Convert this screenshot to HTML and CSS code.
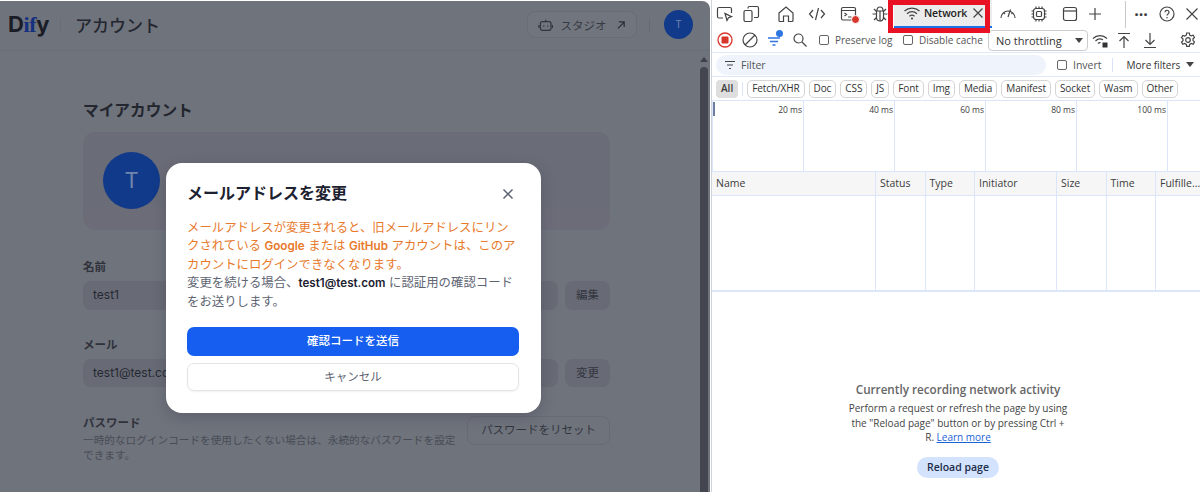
FILE: index.html
```html
<!DOCTYPE html>
<html lang="ja">
 <head>
  <meta charset="utf-8">
  <title>Dify account</title>
  <link rel="stylesheet" href="styles.css">
 </head>
 <body>

  <div id="app">
    <div id="top-bar">
      <div class="logo">D<span class="logo-blue">if</span>y</div>
      <div class="top-sep"></div>
      <div class="page-name">アカウント</div>
      <div class="top-right">
        <div class="studio-btn">
          <svg width="16" height="16" viewBox="0 0 16 16" fill="none" stroke="#33363f" stroke-width="1.3"><rect x="2.5" y="4.5" width="11" height="9" rx="2"/><path d="M8 4.5V2.500M1 8v3M15 8v3"/><circle cx="6" cy="9" r=".8" fill="#33363f" stroke="none"/><circle cx="10" cy="9" r=".8" fill="#33363f" stroke="none"/></svg>
          <span>スタジオ</span>
          <svg width="10" height="10" viewBox="0 0 10 10" fill="none" stroke="#2b2e36" stroke-width="1.3"><path d="M2 8.500L8.500 2M3 1.700h5.500v5.500"/></svg>
        </div>
        <div class="top-sep2"></div>
        <div class="avatar-small">T</div>
      </div>
    </div>

    <div id="account">
      <h1>マイアカウント</h1>
      <div class="profile-card"><div class="avatar">T</div></div>

      <div class="label name-label">名前</div>
      <div class="field-row">
        <div class="fake-input">test1</div>
        <div class="fake-btn">編集</div>
      </div>

      <div class="label mail-label">メール</div>
      <div class="field-row">
        <div class="fake-input">test1@test.com</div>
        <div class="fake-btn">変更</div>
      </div>

      <div class="password-row">
        <div class="password-text">
          <div class="label">パスワード</div>
          <p>一時的なログインコードを使用したくない場合は、永続的なパスワードを設定<br>できます。</p>
        </div>
        <div class="reset-btn">パスワードをリセット</div>
      </div>
    </div>

    <div class="scroll-arrow"></div>
    <div class="scroll-thumb"></div>

    <div id="modal">
      <div class="modal-head">
        <h2>メールアドレスを変更</h2>
        <svg width="12" height="12" viewBox="0 0 12 12" fill="none" stroke="#5d6272" stroke-width="1.5"><path d="M1.500 1.500l9 9M10.500 1.500l-9 9"/></svg>
      </div>
      <p class="warn">メールアドレスが変更されると、旧メールアドレスにリン<br>クされている <b>Google</b> または <b>GitHub</b> アカウントは、このア<br>カウントにログインできなくなります。</p>
      <p class="info">変更を続ける場合、<b>test1@test.com</b> に認証用の確認コード<br>をお送りします。</p>
      <div class="btn-primary">確認コードを送信</div>
      <div class="btn-cancel">キャンセル</div>
    </div>
  </div><!-- app -->

  <div id="devtools">
    <div class="tool-row tabs">
      <svg class="ic at-inspect" width="18" height="18" viewBox="0 0 18 18"><path d="M7 13H3a1.500 1.500 0 0 1-1.500-1.500V4A1.500 1.500 0 0 1 3 2.500h11A1.500 1.500 0 0 1 15.500 4v4M9 8.500l2 7 1.500-2.800 3-1z"/></svg>
      <svg class="ic at-device" width="18" height="18" viewBox="0 0 18 18"><path d="M6 3.500V3a1.500 1.500 0 0 1 1.500-1.500H15A1.500 1.500 0 0 1 16.500 3v8a1.500 1.500 0 0 1-1.500 1.500h-3"/><rect x="2" y="5.500" width="8" height="11" rx="1.500"/></svg>
      <svg class="ic at-home" width="18" height="18" viewBox="0 0 18 18"><path d="M2 8l7-6 7 6v7.500a1 1 0 0 1-1 1h-3.500V11h-5v5.500H3a1 1 0 0 1-1-1z"/></svg>
      <svg class="ic at-code" width="18" height="18" viewBox="0 0 18 18"><path d="M5 5L1.500 9 5 13M13 5l3.500 4-3.500 4M10.500 3L7.500 15"/></svg>
      <span class="console-ic">
        <svg class="ic" width="18" height="18" viewBox="0 0 18 18"><rect x="1.500" y="2.500" width="14" height="12.500" rx="1.500"/><path d="M1.500 5.500h14M4.500 8l2 1.500-2 1.500M8 12h3.500"/></svg>
        <i class="red-dot"></i>
      </span>
      <svg class="ic at-bug" width="18" height="18" viewBox="0 0 18 18"><path d="M6 5.500C6 3.500 7 2 9 2s3 1.500 3 3.500M5.500 6h7v6.500a3.500 3.500 0 0 1-7 0zM5.500 9H1.500M12.500 9h4M5.500 6.500L3 4M12.500 6.500L15 4M5.500 12.500L3 15M12.500 12.500L15 15M9 6v10"/></svg>
      <div class="net-tab">
        <svg class="ic" width="18" height="16" viewBox="0 0 18 16"><path d="M1.500 6a11 11 0 0 1 15 0M4 8.700a7.300 7.300 0 0 1 10 0M6.500 11.200a3.700 3.700 0 0 1 5 0"/><circle cx="9" cy="13.500" r="1" fill="#333" stroke="none"/></svg>
        <span>Network</span>
        <svg class="ic" width="12" height="12" viewBox="0 0 12 12"><path d="M1.500 1.500l9 9M10.500 1.500l-9 9"/></svg>
      </div>
      <svg class="ic at-perf" width="18" height="18" viewBox="0 0 18 18"><path d="M2 13a7 7 0 0 1 14 0M9 12l2.500-7.500M4.500 7.500L6 9M13.500 7.500L12.500 9"/></svg>
      <svg class="ic at-mem" width="18" height="18" viewBox="0 0 18 18"><rect x="3.500" y="3.500" width="11" height="11" rx="2.500"/><rect x="6.500" y="6.500" width="5" height="5" rx="1"/><path d="M6 1.500v2M9 1.500v2M12 1.500v2M6 14.500v2M9 14.500v2M12 14.500v2M1.500 6h2M1.500 9h2M1.500 12h2M14.500 6h2M14.500 9h2M14.500 12h2"/></svg>
      <svg class="ic at-win" width="18" height="18" viewBox="0 0 18 18"><rect x="2.500" y="2.500" width="13" height="13" rx="2"/><path d="M2.500 6h13"/></svg>
      <svg class="ic at-plus" width="14" height="14" viewBox="0 0 14 14"><path d="M7 1v12M1 7h12"/></svg>
      <div class="tab-sep"></div>
      <div class="dots">···</div>
      <svg class="ic at-help" width="16" height="16" viewBox="0 0 16 16"><circle cx="8" cy="8" r="7"/><path d="M6 6.300a2 2 0 1 1 3 1.700c-.7.400-1 .8-1 1.500"/><circle cx="8" cy="11.800" r=".7" fill="#333" stroke="none"/></svg>
      <svg class="ic at-close" width="12" height="12" viewBox="0 0 12 12"><path d="M.5.500l11 11M11.500.500l-11 11"/></svg>
    </div>

    <div class="tool-row actions">
      <svg class="at-record" width="16" height="16" viewBox="0 0 16 16"><circle cx="8" cy="8" r="7" fill="none" stroke="#d9362b" stroke-width="1.300"/><rect x="4.500" y="4.500" width="7" height="7" rx="1" fill="#d9362b"/></svg>
      <svg class="ic at-clear" width="16" height="16" viewBox="0 0 16 16"><circle cx="8" cy="8" r="7"/><path d="M3 13L13 3"/></svg>
      <span class="fetch-ic">
        <svg width="16" height="14" viewBox="0 0 16 14" fill="none" stroke="#2f76e0" stroke-width="1.300"><path d="M1 5h12M3 8.500h8M5.500 12h3"/></svg>
        <i class="blue-dot"></i>
      </span>
      <svg class="ic at-search" width="14" height="14" viewBox="0 0 14 14"><circle cx="5.500" cy="5.500" r="4.500"/><path d="M9 9l4.500 4.500"/></svg>
      <label class="check at-preserve"><i></i>Preserve log</label>
      <label class="check at-cache"><i></i>Disable cache</label>
      <div class="throttle">No throttling<b></b></div>
      <svg class="ic at-wifi" width="17" height="17" viewBox="0 0 17 17"><path d="M1 6.500a10 10 0 0 1 14 0M3.500 9a6.500 6.500 0 0 1 7.500-1.200M6 11.500a3 3 0 0 1 2.500-.8"/><rect x="10.500" y="10.500" width="5" height="5" fill="#333" stroke="none"/></svg>
      <svg class="ic at-up" width="14" height="17" viewBox="0 0 14 17"><path d="M1 1.500h12M7 16V4.500M2.500 9L7 4.500 11.500 9"/></svg>
      <svg class="ic at-down" width="14" height="17" viewBox="0 0 14 17"><path d="M1 15.500h12M7 1v11.500M2.500 8L7 12.500 11.500 8"/></svg>
      <svg class="ic at-gear" width="16" height="16" viewBox="0 0 16 16"><path d="M6.700 1h2.600l.4 2 1.600.9 1.900-.7 1.300 2.300-1.500 1.300v1.800l1.500 1.300-1.300 2.300-1.900-.7-1.600.9-.4 2H6.700l-.4-2-1.600-.9-1.900.7L1.500 10.100 3 8.800V7L1.500 5.700l1.300-2.300 1.900.7 1.600-.9z"/><circle cx="8" cy="8" r="2.300"/></svg>
    </div>

    <div class="tool-row filters">
      <div class="filter-box">
        <svg class="ic" width="12" height="10" viewBox="0 0 12 10"><path d="M1 1.500h10M3 5h6M5 8.500h2"/></svg>
        <span>Filter</span>
      </div>
      <label class="check"><i></i>Invert</label>
      <div class="filter-sep"></div>
      <div class="more-filters">More filters<b></b></div>
    </div>

    <div class="tool-row chips">
      <span class="chip-all">All</span>
      <i class="chip-sep"></i>
      <span class="chip">Fetch/XHR</span>
      <span class="chip">Doc</span>
      <span class="chip">CSS</span>
      <span class="chip">JS</span>
      <span class="chip">Font</span>
      <span class="chip">Img</span>
      <span class="chip">Media</span>
      <span class="chip">Manifest</span>
      <span class="chip">Socket</span>
      <span class="chip">Wasm</span>
      <span class="chip">Other</span>
    </div>

    <div class="overview">
      <i class="overview-mark"></i>
      <div class="tick">20 ms</div>
      <div class="tick">40 ms</div>
      <div class="tick">60 ms</div>
      <div class="tick">80 ms</div>
      <div class="tick">100 ms</div>
      <div class="tick"></div>
    </div>

    <div class="net-table">
      <div class="col col-name"><div class="col-head">Name</div></div>
      <div class="col col-s"><div class="col-head">Status</div></div>
      <div class="col col-s"><div class="col-head">Type</div></div>
      <div class="col col-init"><div class="col-head">Initiator</div></div>
      <div class="col col-s"><div class="col-head">Size</div></div>
      <div class="col col-s"><div class="col-head">Time</div></div>
      <div class="col col-last"><div class="col-head">Fulfille...</div></div>
    </div>

    <div class="net-empty">
      <h3>Currently recording network activity</h3>
      <p>Perform a request or refresh the page by using<br>the "Reload page" button or by pressing Ctrl +<br>R. <a href="#">Learn more</a></p>
      <div class="reload-btn">Reload page</div>
    </div>

    <div class="red-box"></div>
  </div><!-- devtools -->

 </body>
</html>
```

FILE: styles.css
```css
*{box-sizing:border-box;margin:0;padding:0}
html,body{width:1200px;height:492px;overflow:hidden;background:#fff}
body{display:flex;font-family:"Inter","Noto Sans CJK JP",sans-serif;color:#2b2e38}

/* left: dimmed app */
#app{position:relative;flex:none;width:710px;height:492px;margin-top:1px;background:#6f737c;border-top-right-radius:8px;overflow:hidden}
#top-bar{display:flex;align-items:center;height:50px;padding:0 17px 2px 8px;border-bottom:1px solid #6a6e77}
.logo{width:52px;font:700 22px/1 "Inter",sans-serif;color:#1a1d26;letter-spacing:-.4px}
.logo-blue{color:#14307f;font-family:"Liberation Serif",serif}
.top-sep{width:1px;height:14px;margin:0 14px 0 0;background:#696d76}
.page-name{font-size:17px;font-weight:500;color:#24272f}
.top-right{display:flex;align-items:center;margin-left:auto}
.studio-btn{display:flex;align-items:center;width:110px;height:27px;padding:0 10px;gap:7px;border:1px solid #686c75;border-radius:8px;background:#71757e;font-size:11.500px;color:#373a44;white-space:nowrap}
.studio-btn span{margin-right:3px}
.top-sep2{width:1px;height:14px;margin:0 14px 0 12px;background:#666a73}
.avatar-small{width:29px;height:29px;border-radius:50%;background:#113a8a;color:#6f85ad;font-size:10px;line-height:29px;text-align:center}

#account{width:527px;margin-left:83px;padding-top:50px}
h1{font-size:15.700px;line-height:20px;font-weight:600;color:#23262e}
.profile-card{height:98px;margin-top:11px;padding:20px;border-radius:12px;background:linear-gradient(#6a6d77,#6a6d77 70%,#6d6c7a)}
.avatar{width:57px;height:57px;border-radius:50%;background:#113a8a;color:#6f85ad;font-size:22px;line-height:57px;text-align:center}
.label{font-size:11.500px;line-height:16px;font-weight:600;color:#2f323b}
.name-label{margin-top:29px}
.mail-label{margin-top:27px}
.field-row{display:flex;gap:7px;margin-top:6px}
.fake-input{flex:1;height:28.500px;padding-left:10px;border-radius:8px;background:#686b75;font-size:12px;line-height:28px;color:#262932}
.fake-btn{width:45px;height:28.500px;border-radius:8px;background:#686b75;font-size:11.500px;line-height:28px;text-align:center;color:#33363f}
.password-row{display:flex;justify-content:space-between;margin-top:28px}
.password-text{width:385px}
.password-text p{margin-top:2px;font-size:10.650px;line-height:15px;color:#494c56;white-space:nowrap}
.reset-btn{width:143px;height:29px;margin-top:1px;border:1px solid #686b75;border-radius:8px;font-size:11.500px;line-height:27px;text-align:center;color:#33363f}

.scroll-arrow{position:absolute;top:56px;left:700px;border:4px solid transparent;border-top:0;border-bottom:5px solid #3e414a}
.scroll-thumb{position:absolute;top:66px;bottom:0;left:700px;width:8px;border-radius:4px 4px 0 0;background:#43464f}

#modal{position:absolute;top:162px;left:166px;width:375px;height:250px;padding:20px 22px 0 21px;border-radius:16px;background:#fff;box-shadow:0 4px 14px rgba(40,40,60,.25)}
.modal-head{display:flex;align-items:center;justify-content:space-between;padding-right:5px}
h2{font-size:16px;line-height:21px;font-weight:600;color:#1d2230}
.warn,.info{font-size:12.400px;line-height:18.500px;white-space:nowrap}
.warn{margin-top:14.500px;color:#e8792b}
.warn b{font-size:11.700px;font-weight:600}
.info{color:#5e6472}
.info b{font-size:11.600px;font-weight:600;color:#1d2230}
.btn-primary{height:29px;margin-top:15.500px;border-radius:7px;background:#155eef;color:#fff;font-size:11.500px;font-weight:500;line-height:29px;text-align:center}
.btn-cancel{height:28px;margin-top:7px;border:1px solid #e3e4e8;border-radius:7px;box-shadow:0 1px 2px rgba(0,0,0,.06);color:#5e6472;font-size:11.500px;line-height:26px;text-align:center}

/* right: devtools */
#devtools{position:relative;flex:none;width:489px;height:492px;margin-left:1px;border-left:1px solid #cfd3da;font-family:"Open Sans","Liberation Sans",sans-serif;font-size:10.500px;color:#3c3c3c}
.ic{display:block;flex:none;fill:none;stroke:#444;stroke-width:1.200}
.tool-row{display:flex;align-items:center;border-bottom:1px solid #dfe8fa}
.tabs{height:28px;padding-left:4px;border-bottom:0}
.at-device{margin-left:8px}
.at-home{margin-left:17px}
.at-code{margin-left:13px}
.console-ic{position:relative;margin-left:14px}
.red-dot{position:absolute;top:10px;left:11px;width:9px;height:9px;border:1px solid #fff;border-radius:50%;background:#d9362b}
.at-bug{margin-left:13px}
.net-tab{display:flex;align-items:center;flex:none;width:98px;height:28px;margin-left:5px;padding-left:9px;gap:3px;background:#ececec;border-bottom:2px solid #1a73e8;font-weight:600;letter-spacing:-.1px;color:#222}
.net-tab span{margin-right:2px}
.at-perf{margin-left:7px}
.at-mem{margin-left:13px}
.at-win{margin-left:13px}
.at-plus{margin-left:9px}
.tab-sep{width:1px;height:27px;margin-left:23px;background:#c8c8c8}
.dots{width:26px;margin-left:2px;font-size:16px;font-weight:700;line-height:16px;text-align:center}
.at-help{margin-left:5px}
.at-close{margin-left:11px}

.actions{height:25px;padding-left:5px}
.at-clear{margin-left:9px}
.fetch-ic{position:relative;display:block;width:16px;height:14px;margin-left:9px}
.blue-dot{position:absolute;top:-3px;left:9px;width:7px;height:7px;border-radius:50%;background:#2f76e0}
.at-search{margin-left:10px}
.check{display:flex;align-items:center;flex:none;gap:6px;color:#555;white-space:nowrap}
.check i{display:block;flex:none;width:10px;height:10px;border:1px solid #666;border-radius:2px;background:#fff}
.at-preserve{width:76px;margin-left:12px;font-size:10px}
.at-cache{width:80px;margin-left:8px;font-size:10px}
.throttle{display:flex;align-items:center;justify-content:space-between;flex:none;width:100px;height:21px;margin-left:5px;padding:0 4px 0 7px;border:1px solid #ccc;border-radius:4px;font-size:11px;color:#333;white-space:nowrap}
.throttle b,.more-filters b{display:block;border:4.500px solid transparent;border-bottom:0;border-top:5px solid #444}
.at-wifi{margin-left:4px}
.at-up{margin-left:8px}
.at-down{margin-left:12px}
.at-gear{margin-left:23px}

.filters{height:24px;padding-left:4px}
.filter-box{display:flex;align-items:center;flex:none;width:330px;height:20px;padding-left:8px;gap:5px;border-radius:10px;background:#eef3fc;color:#555}
.filters .check{margin-left:11px}
.filter-sep{width:1px;height:14px;margin-left:10px;background:#d9e3f7}
.more-filters{display:flex;align-items:center;gap:6px;margin-left:14px;font-size:10px;color:#333;white-space:nowrap}

.chips{height:24px;gap:4px;padding-left:4px;border-bottom:1px solid #dbe6fb}
.chip-all{height:18px;padding:0 5px;border-radius:4px;background:#dedede;font-weight:600;line-height:17px;font-size:10px}
.chip-sep{width:1px;height:14px;background:#dbe6fb}
.chip{height:18px;padding:0 4px;border:1px solid #d5d5d5;border-radius:5px;font-size:10px;letter-spacing:-.1px;line-height:15px;color:#333}

.overview{position:relative;display:flex;height:71px;border-left:1px solid #dbe6fb;border-bottom:1px solid #dbe6fb}
.overview-mark{position:absolute;top:1px;left:0;width:2px;height:14px;background:#6d7ea0}
.tick{flex:none;width:91px;height:70px;padding:3px 1px 0 0;border-right:1px solid #dbe6fb;font-size:8.500px;line-height:12px;text-align:right}

.net-table{display:flex;height:120px;border-bottom:2px solid #dbe6fb}
.col{flex:none;border-right:1px solid #dbe6fb}
.col-name{width:164px}
.col-s{width:49.500px}
.col-init{width:82px}
.col-last{flex:1;border-right:0}
.col-head{height:24px;padding-left:4px;background:#f6f6f6;border-bottom:1px solid #dbe6fb;font-size:10.500px;line-height:23px;white-space:nowrap;overflow:hidden}

.net-empty{display:flex;flex-direction:column;align-items:center;padding:89px 0 0 4px;text-align:center}
h3{font-size:11.700px;line-height:16px;font-weight:600;color:#666}
.net-empty p{margin-top:4px;font-size:10px;line-height:14.500px;color:#444;white-space:nowrap}
.net-empty a{color:#1a62d6}
.reload-btn{width:82px;height:21px;margin-top:12px;border-radius:11px;background:#d3e3fd;font-weight:600;line-height:21px;color:#1c2b4a}

.red-box{position:absolute;top:0;left:176px;width:102px;height:33px;border:5px solid #e81224}
```
